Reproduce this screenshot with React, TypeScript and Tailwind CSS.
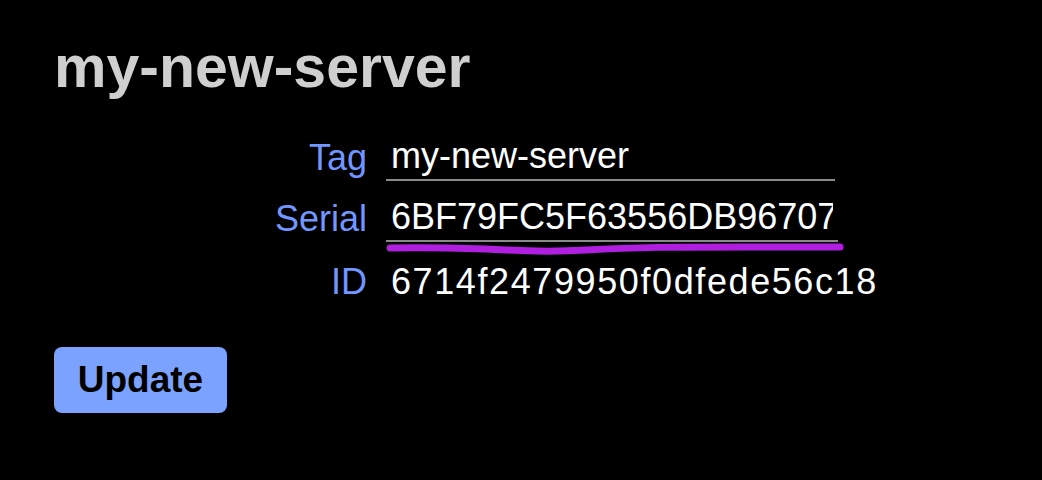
import { useState } from 'react'

const font = { fontFamily: '"Liberation Sans", Arial, sans-serif' }

function Squiggle() {
  return (
    <svg className="pointer-events-none absolute left-0 top-[42px]" width="470" height="22" viewBox="0 0 470 22">
      <path
        d="M4 10 C 40 9, 70 10, 100 11 S 150 15, 200 12 S 290 9, 360 9 S 440 9, 454 9"
        fill="none"
        stroke="#b01ee0"
        strokeWidth="7"
        strokeLinecap="round"
      />
    </svg>
  )
}

export default function App() {
  const [tag, setTag] = useState('my-new-server')
  const [serial, setSerial] = useState('6BF79FC5F63556DB96707')

  return (
    <div className="min-h-screen bg-black pl-[54px] pt-[38px]" style={font}>
      <h1 className="text-[59px] font-bold leading-none text-[#cfcfcf]">my-new-server</h1>

      <div className="mt-[34px] grid grid-cols-[313px_auto] items-center gap-x-[19px]">
        <label className="text-right text-[36px] text-[#7196ff]">Tag</label>
        <input
          value={tag}
          onChange={(e) => setTag(e.target.value)}
          className="h-[46px] w-[449px] border-b-2 border-[#8a8a8a] bg-transparent px-[5px] pb-[2px] text-[36px] text-white outline-none"
        />

        <label className="mt-[7px] text-right text-[36px] text-[#7196ff]">Serial</label>
        <div className="relative mt-[7px]">
          <input
            value={serial}
            onChange={(e) => setSerial(e.target.value)}
            className="h-[46px] w-[452px] border-b-2 border-[#8a8a8a] bg-transparent px-[5px] pb-[2px] text-[36px] text-white outline-none"
          />
          <Squiggle />
        </div>

        <span className="mt-[9px] text-right text-[36px] text-[#7196ff]">ID</span>
        <span className="mt-[9px] pl-[5px] text-[36px] tracking-[1.6px] text-white">6714f2479950f0dfede56c18</span>
      </div>

      <button className="mt-[38px] h-[66px] w-[173px] rounded-[8px] bg-[#7ba2ff] text-[37px] font-bold text-black">
        Update
      </button>
    </div>
  )
}
